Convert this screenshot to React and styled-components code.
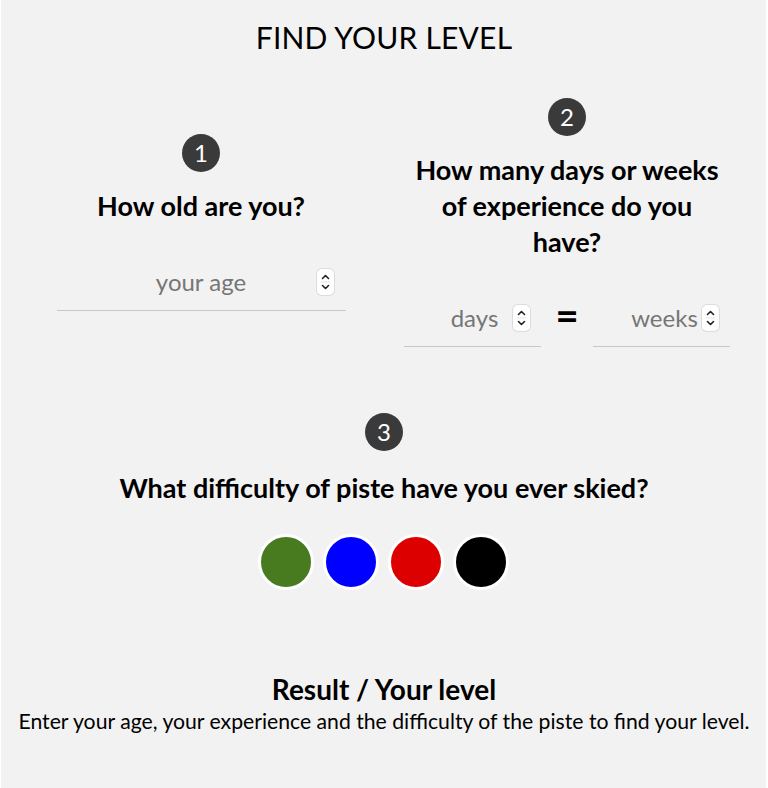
import React from "react";
import styled, { createGlobalStyle } from "styled-components";

const Global = createGlobalStyle`
  html, body { margin: 0; padding: 0; background: #ffffff; }
  body { font-family: Lato, "Noto Sans", sans-serif; color: #000; }
  * { box-sizing: border-box; }
`;

const Page = styled.main`
  margin: 0 2px 0 1px;
  min-height: 788px;
  background: #f2f2f2;
  padding: 19px 16px 0 17px;
  display: flex;
  flex-direction: column;
  align-items: center;
`;

const Title = styled.h1`
  margin: 0;
  font-size: 30px;
  line-height: 36px;
  font-weight: 400;
  letter-spacing: 0.2px;
`;

const Steps = styled.div`
  width: 100%;
  margin-top: 43px;
  display: grid;
  grid-template-columns: 1fr 1fr;
  align-items: center;
`;

const Step = styled.section`
  display: flex;
  flex-direction: column;
  align-items: center;
  margin-top: ${(p) => p.$top || 0}px;
`;

const Badge = styled.div`
  width: 38px;
  height: 38px;
  border-radius: 50%;
  background: #3a3a3a;
  color: #fff;
  display: flex;
  align-items: center;
  justify-content: center;
  font-size: 24px;
  line-height: 1;
`;

const Question = styled.h2`
  margin: ${(p) => p.$mt || 16}px 0 0;
  font-size: 27px;
  line-height: 36px;
  font-weight: 700;
  text-align: center;
  max-width: ${(p) => p.$max || "none"};
`;

const Field = styled.div`
  position: relative;
  width: ${(p) => p.$w}px;
  height: 54px;
  border-bottom: 1px solid #c8c8c8;
`;

const Input = styled.input`
  width: 100%;
  height: 100%;
  border: none;
  background: transparent;
  outline: none;
  text-align: center;
  font-family: Lato, "Noto Sans", sans-serif;
  font-size: 24px;
  color: #333;
  padding: 0 0 4px ${(p) => p.$shift || 0}px;
  &::placeholder { color: #767676; }
  -moz-appearance: textfield;
  &::-webkit-inner-spin-button, &::-webkit-outer-spin-button { -webkit-appearance: none; margin: 0; }
`;

const Spinner = styled.div`
  position: absolute;
  right: ${(p) => p.$right}px;
  top: 12px;
  width: 17px;
  height: 26px;
  border-radius: 5px;
  background: #fff;
  box-shadow: 0 0 0 1px #dcdcdc;
  display: flex;
  flex-direction: column;
  align-items: center;
  justify-content: center;
  svg { display: block; }
`;

const Fields = styled.div`
  margin-top: ${(p) => p.$mt || 33}px;
  display: flex;
  align-items: center;
`;

const Equals = styled.div`
  width: 52px;
  text-align: center;
  font-size: 40px;
  font-weight: 700;
  line-height: 1;
  margin-top: -10px;
`;

const Colours = styled.div`
  margin-top: 28px;
  display: flex;
  gap: 9px;
`;

const Dot = styled.button`
  width: 56px;
  height: 56px;
  border-radius: 50%;
  border: 3px solid #fff;
  background: ${(p) => p.$c};
  padding: 0;
  cursor: pointer;
`;

const Result = styled.section`
  margin-top: 84px;
  text-align: center;
`;

const ResultTitle = styled.h3`
  margin: 0;
  font-size: 28px;
  line-height: 30px;
  font-weight: 700;
`;

const ResultText = styled.p`
  margin: 3px 0 0;
  font-size: 21.2px;
  line-height: 28px;
  white-space: nowrap;
`;

const SpinIcon = () => (
  <svg width="11" height="20" viewBox="0 0 11 20" fill="none" stroke="#222" strokeWidth="1.6" strokeLinecap="round" strokeLinejoin="round">
    <path d="M2.5 6.5 L5.5 3.5 L8.5 6.5" />
    <line x1="1" y1="10" x2="10" y2="10" stroke="#e4e4e4" strokeWidth="1" />
    <path d="M2.5 13.5 L5.5 16.5 L8.5 13.5" />
  </svg>
);

const NumberField = ({ placeholder, width, right, shift }) => (
  <Field $w={width}>
    <Input type="number" placeholder={placeholder} $shift={shift} />
    <Spinner $right={right}>
      <SpinIcon />
    </Spinner>
  </Field>
);

export default function App() {
  return (
    <>
      <Global />
      <Page>
        <Title>FIND YOUR LEVEL</Title>
        <Steps>
          <Step>
            <Badge>1</Badge>
            <Question>How old are you?</Question>
            <Fields>
              <NumberField placeholder="your age" width={289} right={12} />
            </Fields>
          </Step>
          <Step>
            <Badge>2</Badge>
            <Question $max="320px">How many days or weeks of experience do you have?</Question>
            <Fields $mt={33}>
              <NumberField placeholder="days" width={137} right={11} shift={4} />
              <Equals>=</Equals>
              <NumberField placeholder="weeks" width={137} right={11} shift={6} />
            </Fields>
          </Step>
        </Steps>
        <Step $top={66}>
          <Badge>3</Badge>
          <Question $mt={19}>What difficulty of piste have you ever skied?</Question>
          <Colours>
            <Dot $c="#487b20" aria-label="green" />
            <Dot $c="#0000ff" aria-label="blue" />
            <Dot $c="#dd0000" aria-label="red" />
            <Dot $c="#000000" aria-label="black" />
          </Colours>
        </Step>
        <Result>
          <ResultTitle>Result / Your level</ResultTitle>
          <ResultText>Enter your age, your experience and the difficulty of the piste to find your level.</ResultText>
        </Result>
      </Page>
    </>
  );
}
